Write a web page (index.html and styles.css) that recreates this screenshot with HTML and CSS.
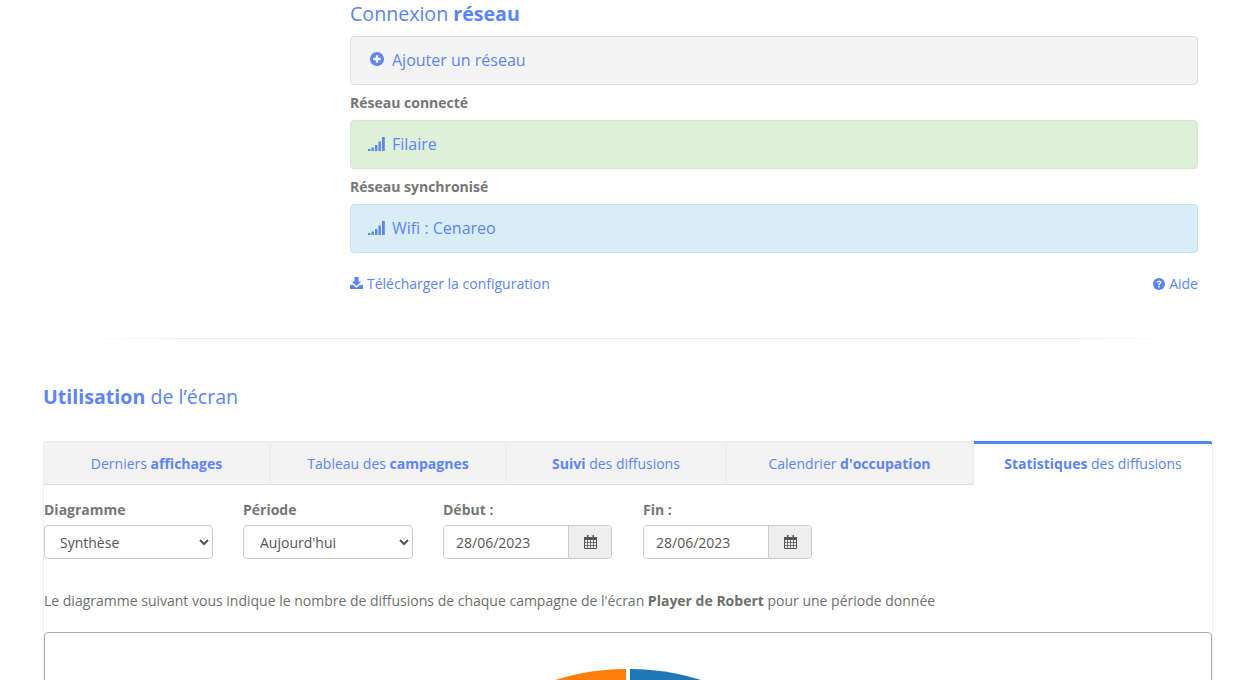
FILE: index.html
```html
<!DOCTYPE html>
<html lang="fr">
<head>
<meta charset="utf-8">
<title>Écran</title>
<link rel="stylesheet" href="styles.css">
</head>
<body>
<main class="page">
  <section class="network">
    <h2 class="title">Connexion <b>réseau</b></h2>
    <a class="net net-add">
      <svg class="ic-plus" viewBox="0 0 14 14"><circle cx="7" cy="7" r="7" fill="#5b84f5"/><path d="M7 3.200v7.600M3.200 7h7.600" stroke="#f4f4f4" stroke-width="2.400"/></svg>
      <span>Ajouter un réseau</span>
    </a>
    <div class="net-label">Réseau connecté</div>
    <a class="net net-ok">
      <svg class="ic-signal" viewBox="0 0 17 14"><path d="M0 12h2.400v2H0zM3.500 10.500h2.400V14H3.500zM7 8h2.400v6H7zM10.500 4.500h2.400V14h-2.400zM14 0h2.800v14H14z" fill="#5b84f5"/></svg>
      <span>Filaire</span>
    </a>
    <div class="net-label">Réseau synchronisé</div>
    <a class="net net-sync">
      <svg class="ic-signal" viewBox="0 0 17 14"><path d="M0 12h2.400v2H0zM3.500 10.500h2.400V14H3.500zM7 8h2.400v6H7zM10.500 4.500h2.400V14h-2.400zM14 0h2.800v14H14z" fill="#5b84f5"/></svg>
      <span>Wifi : Cenareo</span>
    </a>
    <div class="net-links">
      <a class="link">
        <svg class="ic-dl" viewBox="0 0 13 12"><path d="M4.500 0h4v4.500h2.800L6.500 9 1.700 4.500h2.800z" fill="#5b84f5"/><path d="M0 8h3.200l3.300 2.700L9.800 8H13v4H0z" fill="#5b84f5"/></svg>
        <span>Télécharger la configuration</span>
      </a>
      <a class="link">
        <svg class="ic-help" viewBox="0 0 12 12"><circle cx="6" cy="6" r="6" fill="#5b84f5"/><path d="M3.700 4.600C3.800 3.200 4.800 2.400 6.100 2.400c1.300 0 2.300.8 2.300 1.900 0 1.600-1.700 1.600-1.700 2.700H5.200c0-1.800 1.600-1.800 1.600-2.600 0-.4-.3-.7-.8-.7s-.8.300-.9.900z" fill="#fff"/><path d="M5.200 7.800h1.500v1.600H5.200z" fill="#fff"/></svg>
        <span>Aide</span>
      </a>
    </div>
  </section>

  <hr class="divider">

  <section class="usage">
    <h2 class="title"><b>Utilisation</b> de l’écran</h2>
    <nav class="tabs">
      <a class="tab"><span>Derniers <b>affichages</b></span></a>
      <a class="tab"><span>Tableau des <b>campagnes</b></span></a>
      <a class="tab"><span><b>Suivi</b> des diffusions</span></a>
      <a class="tab"><span>Calendrier <b>d'occupation</b></span></a>
      <a class="tab tab-active"><span><b>Statistiques</b> des diffusions</span></a>
    </nav>
    <div class="panel">
      <form class="filters">
        <div class="field field-first">
          <label class="field-label">Diagramme</label>
          <select class="select select-first"><option>Synthèse</option></select>
        </div>
        <div class="field">
          <label class="field-label">Période</label>
          <select class="select"><option>Aujourd'hui</option></select>
        </div>
        <div class="field">
          <label class="field-label">Début :</label>
          <div class="date">
            <input class="date-input" value="28/06/2023">
            <span class="date-btn"><svg class="ic-cal" viewBox="0 0 13 14"><path d="M.5 2.500h12v11H.5z" fill="none" stroke="#555" stroke-width="1"/><path d="M0 2h13v3H0z" fill="#555"/><path d="M3 0h1.500v3H3zM8.500 0H10v3H8.500z" fill="#555"/><path d="M.5 7.500h12M.5 10.500h12M3.500 5v8M6.500 5v8M9.500 5v8" stroke="#555" stroke-width=".8"/></svg></span>
          </div>
        </div>
        <div class="field">
          <label class="field-label">Fin :</label>
          <div class="date">
            <input class="date-input" value="28/06/2023">
            <span class="date-btn"><svg class="ic-cal" viewBox="0 0 13 14"><path d="M.5 2.500h12v11H.5z" fill="none" stroke="#555" stroke-width="1"/><path d="M0 2h13v3H0z" fill="#555"/><path d="M3 0h1.500v3H3zM8.500 0H10v3H8.500z" fill="#555"/><path d="M.5 7.500h12M.5 10.500h12M3.500 5v8M6.500 5v8M9.500 5v8" stroke="#555" stroke-width=".8"/></svg></span>
          </div>
        </div>
      </form>
      <p class="intro">Le diagramme suivant vous indique le nombre de diffusions de chaque campagne de l'écran <b>Player de Robert</b> pour une période donnée</p>
      <div class="chart">
        <svg class="pie" viewBox="0 0 480 480">
          <path d="M242 5A235 235 0 0 1 477 240H242z" fill="#1f77b4"/>
          <path d="M238 5A235 235 0 0 0 3 240H238z" fill="#ff7f0e"/>
        </svg>
      </div>
    </div>
  </section>
</main>
</body>
</html>
```

FILE: styles.css
```css
html, body {
  margin: 0;
  height: 680px;
  overflow: hidden;
  background: #fff;
}

body {
  font-family: "Open Sans", "Liberation Sans", sans-serif;
  font-size: 14px;
  color: #6f6f6f;
}

.page {
  display: flex;
  flex-direction: column;
}

.network {
  width: 848px;
  margin-left: 350px;
  display: flex;
  flex-direction: column;
}

.title {
  margin: 0;
  font-size: 19.6px;
  font-weight: 400;
  line-height: 28px;
  color: #5b84ff;
}

.title b {
  font-weight: 700;
}

.network .title {
  height: 36px;
}

.net {
  display: flex;
  align-items: center;
  box-sizing: border-box;
  height: 49px;
  padding-left: 17px;
  padding-bottom: 2px;
  border: 1px solid;
  border-radius: 4px;
  font-size: 16px;
  color: #5b84ff;
}

.net-add {
  background: #f4f4f4;
  border-color: #dedede;
  padding-left: 19px;
}

.net-ok {
  background: #dff0d8;
  border-color: #d3e9c8;
}

.net-sync {
  background: #d9edf7;
  border-color: #bce8f1;
}

.net-label {
  height: 35px;
  line-height: 36px;
  font-weight: 700;
  color: #777;
}

.ic-plus {
  width: 14px;
  height: 14px;
  margin-right: 8px;
  margin-top: -1px;
}

.ic-signal {
  width: 17px;
  height: 14px;
  margin-right: 7px;
}

.net-links {
  display: flex;
  justify-content: space-between;
  margin-top: 21px;
  line-height: 20px;
}

.link {
  display: flex;
  align-items: center;
  color: #5b84ff;
}

.ic-dl {
  width: 13px;
  height: 12px;
  margin-right: 4px;
  margin-top: -2px;
}

.ic-help {
  width: 12px;
  height: 12px;
  margin-right: 4px;
}

.divider {
  width: 1100px;
  height: 1px;
  margin: 44px 0 0 80px;
  border: 0;
  background: linear-gradient(90deg, #fff, #eee 10%, #eee 90%, #fff);
}

.usage {
  width: 1170px;
  margin-left: 43px;
  margin-top: 44px;
}

.tabs {
  display: grid;
  grid-template-columns: 228px 236px 220px 247px 239px;
  height: 44px;
  margin-top: 30px;
}

.tab {
  display: flex;
  align-items: center;
  justify-content: center;
  box-sizing: border-box;
  background: #f3f3f3;
  border-top: 2px solid #ececec;
  border-right: 2px solid #eeeeee;
  border-bottom: 1px solid #dedede;
  color: #5b84ff;
}

.tab:first-child {
  border-left: 1px solid #ececec;
  border-top-left-radius: 4px;
}

.tab-active {
  background: #fff;
  border-top: 3px solid #4c86f5;
  border-right: 1px solid #efefef;
  border-bottom: 2px solid #fff;
  border-top-right-radius: 4px;
}

.panel {
  border-left: 1px solid #f0f0f0;
  border-right: 1px solid #f0f0f0;
}

.filters {
  display: flex;
  gap: 30px;
  padding-top: 14px;
}

.field {
  display: flex;
  flex-direction: column;
  width: 170px;
}

.field-first {
  width: 169px;
}

.field-label {
  height: 26px;
  line-height: 21px;
  font-weight: 700;
  color: #777;
}

.select {
  box-sizing: border-box;
  width: 100%;
  height: 34px;
  padding: 0 0 0 12px;
  border: 1px solid #ccc;
  border-radius: 4px;
  background: #fff;
  font: 14px "Open Sans", "Liberation Sans", sans-serif;
  color: #555;
}

.select-first {
  padding-left: 11px;
}

.date {
  display: flex;
  width: 169px;
  height: 34px;
  box-sizing: border-box;
  border: 1px solid #ccc;
  border-radius: 4px;
  overflow: hidden;
}

.date-input {
  flex: 1;
  min-width: 0;
  box-sizing: border-box;
  padding: 0 0 0 12px;
  border: 0;
  outline: 0;
  font: 14px "Open Sans", "Liberation Sans", sans-serif;
  color: #555;
}

.date-btn {
  display: flex;
  align-items: center;
  justify-content: center;
  width: 42px;
  background: #eee;
  border-left: 1px solid #ccc;
}

.ic-cal {
  width: 13px;
  height: 14px;
}

.intro {
  margin: 32px 0 0;
  line-height: 20px;
  color: #6f6f6f;
}

.chart {
  display: flex;
  justify-content: center;
  margin-top: 21px;
  padding-top: 31px;
  height: 500px;
  border: 1px solid #aaa;
  border-radius: 4px;
}

.pie {
  width: 480px;
  height: 480px;
  flex: none;
}
```
